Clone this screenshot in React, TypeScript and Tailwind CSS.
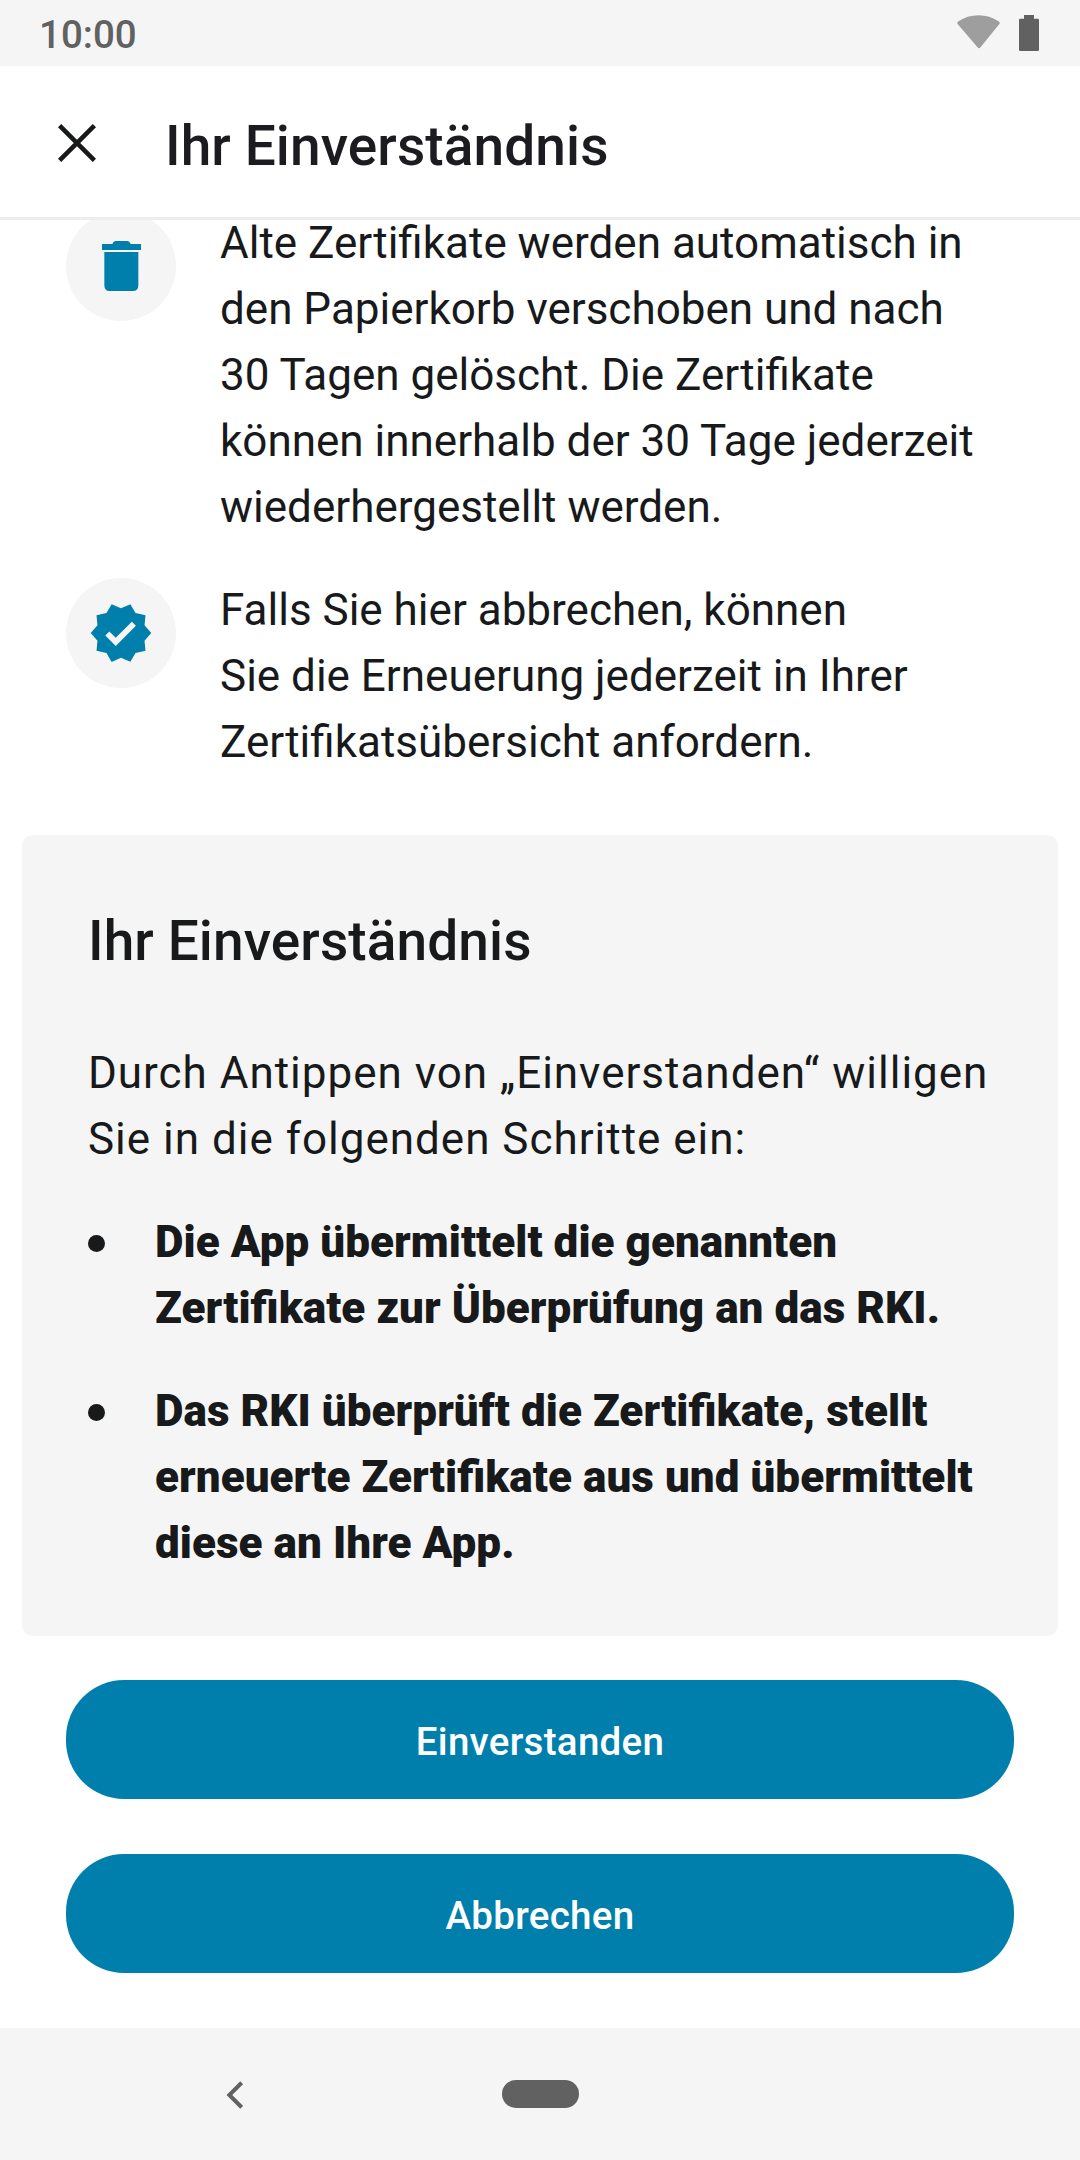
import type { ReactNode } from 'react';

function Lines({ lines }: { lines: string[] }) {
  return (
    <>
      {lines.map((line) => (
        <span key={line} className="block whitespace-nowrap">{line}</span>
      ))}
    </>
  );
}

function InfoRow({ icon, lines }: { icon: ReactNode; lines: string[] }) {
  return (
    <div className="flex items-start gap-[44px]">
      <div className="mt-px flex size-[110px] shrink-0 items-center justify-center rounded-full bg-[#f5f5f5]">{icon}</div>
      <p className="text-[44px] leading-[66px]"><Lines lines={lines} /></p>
    </div>
  );
}

function Bullet({ lines }: { lines: string[] }) {
  return (
    <li className="flex items-start gap-[50px]">
      <span className="mt-[26px] size-[17px] shrink-0 rounded-full bg-[#17191a]" />
      <p className="text-[44px] leading-[66px] font-black tracking-[0.05px] [font-feature-settings:'liga']"><Lines lines={lines} /></p>
    </li>
  );
}

function PrimaryButton({ children }: { children: ReactNode }) {
  return (
    <button className="flex h-[119px] w-full items-center justify-center rounded-[58px] bg-[#007fad] pt-[4px] text-[38.5px] font-medium tracking-[0.3px] text-white">
      {children}
    </button>
  );
}

export default function App() {
  return (
    <div className="flex h-[2160px] w-[1080px] flex-col overflow-hidden bg-white font-['Roboto',sans-serif] text-[#17191a]">
      <div className="flex h-[66px] shrink-0 items-start justify-between bg-[#f5f5f5] pr-[41px] pl-[39px] text-[#616161]">
        <span className="mt-[2px] text-[38.5px] leading-[66px] font-medium">10:00</span>
        <div className="mt-[15px] flex items-start gap-[19px]">
          <svg width="43" height="34" viewBox="0 0 128 102" fill="#9e9e9e">
            <path d="M61 97 2 28q-4-6 2-9Q30 1 64 1t60 18q6 3 2 9L70 97q-5 6-9 0z" />
          </svg>
          <svg width="20" height="36" viewBox="0 0 60 108" fill="#616161">
            <path d="M15 0h30v11h11q4 0 4 4v89q0 4-4 4H4q-4 0-4-4V15q0-4 4-4h11z" />
          </svg>
        </div>
      </div>

      <header className="flex h-[154px] shrink-0 items-start border-b-[3px] border-[#ededed] pl-[58px]">
        <svg className="mt-[58px]" width="38" height="38" viewBox="0 0 38 38" stroke="#17191a" strokeWidth="4.6" fill="none">
          <path d="M1.600 1.600 36.400 36.400M36.400 1.600 1.600 36.400" />
        </svg>
        <h1 className="mt-[47px] ml-[69px] text-[55px] leading-[66px] font-medium tracking-[0.11px] text-[#1c1b1f]">Ihr Einverständnis</h1>
      </header>

      <main className="flex h-[1808px] shrink-0 flex-col overflow-hidden">
        <section className="-mt-[10px] flex flex-col gap-[37px] px-[66px]">
          <InfoRow
            icon={
              <svg width="39" height="50" viewBox="0 0 117 150" fill="#007fad">
                <path d="M0 9h31q3-9 10-9h35q7 0 10 9h31v18H0zM7 33h102v99q0 18-16 18H23q-16 0-16-18z" />
              </svg>
            }
            lines={[
              'Alte Zertifikate werden automatisch in',
              'den Papierkorb verschoben und nach',
              '30 Tagen gelöscht. Die Zertifikate',
              'können innerhalb der 30 Tage jederzeit',
              'wiederhergestellt werden.',
            ]}
          />
          <InfoRow
            icon={
              <svg width="66" height="66" viewBox="0 0 24 24" fill="#007fad">
                <path d="M23 12l-2.440-2.790.340-3.690-3.610-.820-1.890-3.200L12 2.960 8.600 1.500 6.710 4.690 3.100 5.500l.340 3.700L1 12l2.440 2.790-.340 3.700 3.610.820L8.600 22.500l3.400-1.470 3.400 1.460 1.890-3.190 3.610-.820-.340-3.690L23 12zm-12.910 4.720l-3.800-3.810 1.480-1.480 2.320 2.330 5.850-5.870 1.480 1.480-7.330 7.350z" />
              </svg>
            }
            lines={['Falls Sie hier abbrechen, können', 'Sie die Erneuerung jederzeit in Ihrer', 'Zertifikatsübersicht anfordern.']}
          />
        </section>

        <section className="mx-[22px] mt-[60px] h-[801px] shrink-0 rounded-[11px] bg-[#f5f5f5] px-[66px] pt-[73px]">
          <h2 className="text-[55px] leading-[66px] font-medium tracking-[0.11px]">Ihr Einverständnis</h2>
          <p className="mt-[66px] text-[44px] leading-[66px] tracking-[0.99px]">
            <Lines lines={['Durch Antippen von „Einverstanden“ willigen', 'Sie in die folgenden Schritte ein:']} />
          </p>
          <ul className="mt-[37px] flex flex-col gap-[37px]">
            <Bullet lines={['Die App übermittelt die genannten', 'Zertifikate zur Überprüfung an das RKI.']} />
            <Bullet lines={['Das RKI überprüft die Zertifikate, stellt', 'erneuerte Zertifikate aus und übermittelt', 'diese an Ihre App.']} />
          </ul>
        </section>

        <div className="mt-[44px] flex flex-col gap-[55px] px-[66px]">
          <PrimaryButton>Einverstanden</PrimaryButton>
          <PrimaryButton>Abbrechen</PrimaryButton>
        </div>
      </main>

      <nav className="flex h-[132px] shrink-0 items-start bg-[#f5f5f5] pt-[52px] pl-[226px]">
        <svg className="mt-px" width="17" height="28" viewBox="0 0 51 84" stroke="#616161" strokeWidth="12" fill="none">
          <path d="M47 5 10 42l37 37" />
        </svg>
        <div className="ml-[259px] h-[28px] w-[77px] rounded-full bg-[#616161]" />
      </nav>
    </div>
  );
}
